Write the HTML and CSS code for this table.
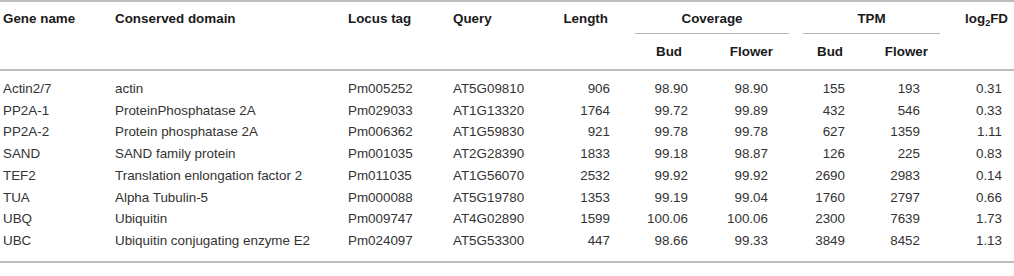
FILE: index.html
```html
<!DOCTYPE html>
<html>
<head>
<meta charset="utf-8">
<link rel="stylesheet" href="styles.css">
</head>
<body>
<table class="tbl">
  <colgroup>
    <col class="w1"><col class="w2"><col class="w3"><col class="w4"><col class="w5">
    <col class="w6"><col class="w7"><col class="w8"><col class="w9"><col class="w10">
  </colgroup>
  <thead>
    <tr class="h1">
      <th class="txt" rowspan="2">Gene name</th>
      <th class="txt" rowspan="2">Conserved domain</th>
      <th class="txt" rowspan="2">Locus tag</th>
      <th class="txt" rowspan="2">Query</th>
      <th class="hlen" rowspan="2">Length</th>
      <th class="grp" colspan="2"><div class="grp-in">Coverage</div></th>
      <th class="grp" colspan="2"><div class="grp-in">TPM</div></th>
      <th class="hfd" rowspan="2">log<sub>2</sub>FD</th>
    </tr>
    <tr class="h2">
      <th class="hcb">Bud</th>
      <th class="hcf">Flower</th>
      <th class="htb">Bud</th>
      <th class="htf">Flower</th>
    </tr>
  </thead>
  <tbody>
    <tr><td class="txt">Actin2/7</td><td class="txt">actin</td><td class="txt">Pm005252</td><td class="txt">AT5G09810</td><td class="len">906</td><td class="cb">98.90</td><td class="cf">98.90</td><td class="tb">155</td><td class="tf">193</td><td class="fd">0.31</td></tr>
    <tr><td class="txt">PP2A-1</td><td class="txt">ProteinPhosphatase 2A</td><td class="txt">Pm029033</td><td class="txt">AT1G13320</td><td class="len">1764</td><td class="cb">99.72</td><td class="cf">99.89</td><td class="tb">432</td><td class="tf">546</td><td class="fd">0.33</td></tr>
    <tr><td class="txt">PP2A-2</td><td class="txt">Protein phosphatase 2A</td><td class="txt">Pm006362</td><td class="txt">AT1G59830</td><td class="len">921</td><td class="cb">99.78</td><td class="cf">99.78</td><td class="tb">627</td><td class="tf">1359</td><td class="fd">1.11</td></tr>
    <tr><td class="txt">SAND</td><td class="txt">SAND family protein</td><td class="txt">Pm001035</td><td class="txt">AT2G28390</td><td class="len">1833</td><td class="cb">99.18</td><td class="cf">98.87</td><td class="tb">126</td><td class="tf">225</td><td class="fd">0.83</td></tr>
    <tr><td class="txt">TEF2</td><td class="txt">Translation enlongation factor 2</td><td class="txt">Pm011035</td><td class="txt">AT1G56070</td><td class="len">2532</td><td class="cb">99.92</td><td class="cf">99.92</td><td class="tb">2690</td><td class="tf">2983</td><td class="fd">0.14</td></tr>
    <tr><td class="txt">TUA</td><td class="txt">Alpha Tubulin-5</td><td class="txt">Pm000088</td><td class="txt">AT5G19780</td><td class="len">1353</td><td class="cb">99.19</td><td class="cf">99.04</td><td class="tb">1760</td><td class="tf">2797</td><td class="fd">0.66</td></tr>
    <tr><td class="txt">UBQ</td><td class="txt">Ubiquitin</td><td class="txt">Pm009747</td><td class="txt">AT4G02890</td><td class="len">1599</td><td class="cb">100.06</td><td class="cf">100.06</td><td class="tb">2300</td><td class="tf">7639</td><td class="fd">1.73</td></tr>
    <tr><td class="txt">UBC</td><td class="txt">Ubiquitin conjugating enzyme E2</td><td class="txt">Pm024097</td><td class="txt">AT5G53300</td><td class="len">447</td><td class="cb">98.66</td><td class="cf">99.33</td><td class="tb">3849</td><td class="tf">8452</td><td class="fd">1.13</td></tr>
  </tbody>
</table>
</body>
</html>
```

FILE: styles.css
```css
html, body {
  margin: 0;
  padding: 0;
  background: #ffffff;
}
body {
  font-family: "Liberation Sans", Arial, sans-serif;
  font-size: 13.4px;
  color: #333333;
}
.tbl {
  width: 1014px;
  table-layout: fixed;
  border-collapse: collapse;
  border-top: 2px solid #bdbdbd;
  border-bottom: 2px solid #bdbdbd;
}
.w1 { width: 112px; }
.w2 { width: 233px; }
.w3 { width: 105px; }
.w4 { width: 95px; }
.w5 { width: 83px; }
.w6 { width: 82px; }
.w7 { width: 86px; }
.w8 { width: 74px; }
.w9 { width: 77px; }
.w10 { width: 67px; }

th {
  font-weight: bold;
  color: #1a1a1a;
  padding: 0;
  white-space: nowrap;
}
thead tr.h2 th,
thead th[rowspan] {
  border-bottom: 2px solid #bdbdbd;
}
.h1 th {
  height: 22px;
  vertical-align: top;
  padding-top: 9px;
  line-height: 15px;
}
.h1 th.grp {
  padding: 9px 0 0 0;
}
.grp-in {
  margin: 0 7px;
  padding-bottom: 7px;
  border-bottom: 1px solid #b3b3b3;
  text-align: center;
}
.h2 th {
  height: 35px;
  line-height: 15px;
  vertical-align: middle;
  text-align: right;
}
th.txt { text-align: left; padding-left: 3px; }
th.hlen { text-align: right; padding-right: 20px; }
th.hfd { text-align: right; padding-right: 6px; }
th.hcb { padding-right: 28px; }
th.hcf { padding-right: 23px; }
th.htb { padding-right: 27px; }
th.htf { padding-right: 19px; }
sub {
  font-size: 9px;
  vertical-align: -3px;
  line-height: 0;
}

td {
  padding: 0;
  height: 21.7px;
  line-height: 21.7px;
  white-space: nowrap;
  text-align: right;
}
tbody tr:first-child td { padding-top: 7px; }
tbody tr:last-child td { padding-bottom: 9px; }
td.txt { text-align: left; padding-left: 3px; }
td.len { padding-right: 18px; }
td.cb { padding-right: 22px; }
td.cf { padding-right: 28px; }
td.tb { padding-right: 25px; }
td.tf { padding-right: 27px; }
td.fd { padding-right: 12px; }
```
